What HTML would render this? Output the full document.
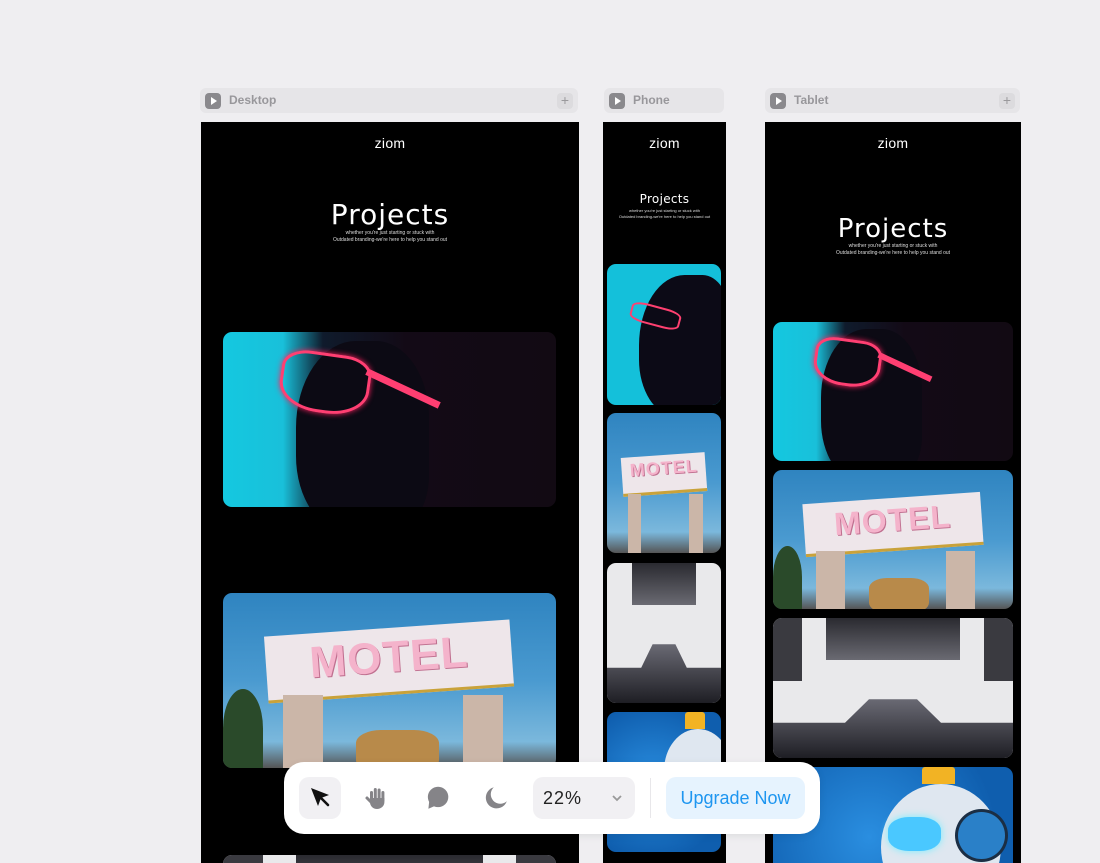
<!DOCTYPE html>
<html><head><meta charset="utf-8"><style>
*{margin:0;padding:0;box-sizing:border-box}
html,body{overflow:hidden}
body{width:1100px;height:863px;background:#efeef1;position:relative;overflow:hidden;font-family:"Liberation Sans",sans-serif}
.hdr{position:absolute;top:88px;height:25px;background:#e6e5e8;border-radius:6px}
.hdr .pl{position:absolute;left:5px;top:5px;width:16px;height:16px;background:#8a898d;border-radius:4px}
.hdr .pl:after{content:"";position:absolute;left:6px;top:4px;border-left:6px solid #fff;border-top:4px solid transparent;border-bottom:4px solid transparent}
.hdr span{position:absolute;left:29px;top:5px;font-size:12px;color:#98979b;font-weight:bold}
.hdr .plus{position:absolute;right:5px;top:5px;width:16px;height:16px;background:#dcdbde;border-radius:4px;color:#9a999c;font-size:14px;line-height:15px;text-align:center}
.fr{position:absolute;top:122px;height:741px;background:#000;overflow:hidden}
.logo{position:absolute;width:100%;text-align:center;color:#fff;font-size:14px;top:13px;letter-spacing:0.3px}
.ttl{position:absolute;width:100%;text-align:center;color:#fff;font-family:"DejaVu Sans",sans-serif;font-weight:normal;letter-spacing:1px}
.sub{position:absolute;width:100%;text-align:center;color:#ddd;font-size:5px;line-height:7px}
.im{position:absolute;border-radius:9px;overflow:hidden}
.g{background:linear-gradient(90deg,#14c8e0 0%,#19c0da 18%,#0f1b2c 30%,#130a16 55%,#120a13 100%)}
.g .hd{position:absolute;left:16%;top:5%;width:50%;height:110%;background:#0c0a14;border-radius:45% 40% 30% 40%}
.g .gl{position:absolute;left:18%;top:12%;width:40%;height:28%;border:3px solid #ff3f72;border-radius:30% 30% 45% 45%;transform:rotate(8deg);box-shadow:0 0 6px #ff2060}
.g .gl2{position:absolute;left:53%;top:22%;width:20%;height:4%;background:#ff3f72;transform:rotate(25deg)}
.g .mg{position:absolute;left:22%;top:30%;width:30%;height:40%;background:radial-gradient(#6a0a3a,transparent 70%)}
.m{background:linear-gradient(180deg,#2f84c0 0%,#4a9ad0 50%,#7bb8dc 85%,#555 100%)}
.m .sg{position:absolute;left:13%;top:20%;width:74%;height:38%;background:#eee6ea;border-bottom:3px solid #c9a23a;transform:rotate(-4deg)}
.m .sg b{position:absolute;left:0;right:0;top:8%;text-align:center;color:#f4b3cb;font-weight:bold;font-family:"Liberation Sans",sans-serif;letter-spacing:1px;text-shadow:1px 1px 0 #c07090}
.m .p1,.m .p2{position:absolute;top:58%;width:12%;height:45%;background:#cbb6a8}
.m .p1{left:18%}.m .p2{left:72%}
.m .tr{position:absolute;left:0;top:55%;width:12%;height:45%;background:#2a4a2a;border-radius:50% 50% 0 0}
.m .bk{position:absolute;left:40%;top:78%;width:25%;height:25%;background:#b88a4a;border-radius:30%}
.b{background:#e9e9eb}
.b .t{position:absolute;left:22%;right:22%;top:0;height:30%;background:linear-gradient(180deg,#2a2a30,#6a6a72)}
.b .tl{position:absolute;left:0;top:0;width:12%;height:45%;background:#3a3a40}
.b .trr{position:absolute;right:0;top:0;width:12%;height:45%;background:#3a3a40}
.b .bt{position:absolute;left:0;right:0;bottom:0;height:42%;background:linear-gradient(180deg,#6a6a74,#1e1e24);clip-path:polygon(0 40%,30% 40%,40% 0,60% 0,70% 40%,100% 40%,100% 100%,0 100%)}
.r{background:radial-gradient(circle at 40% 50%,#2a8ee0,#0f5eae 80%)}
.r .h{position:absolute;left:45%;top:12%;width:50%;height:90%;background:#dfe7f0;border-radius:50%}
.r .e{position:absolute;left:48%;top:36%;width:22%;height:24%;background:#4ac8ff;border-radius:40%;box-shadow:0 0 8px #7ef}
.r .c{position:absolute;left:76%;top:30%;width:22%;height:38%;background:#2a80c8;border:3px solid #1b2e44;border-radius:50%}
.r .y{position:absolute;left:62%;top:0;width:14%;height:12%;background:#f2b324;border-radius:3px 3px 0 0}
.tb{position:absolute;left:284px;top:762px;width:536px;height:72px;background:#fff;border-radius:20px;box-shadow:0 2px 8px rgba(0,0,0,.08)}
.btn{position:absolute;top:15px;width:42px;height:42px;border-radius:10px;display:flex;align-items:center;justify-content:center}
</style></head><body>

<div class="hdr" style="left:200px;width:378px"><div class="pl"></div><span>Desktop</span><div class="plus">+</div></div>
<div class="hdr" style="left:604px;width:120px"><div class="pl"></div><span>Phone</span></div>
<div class="hdr" style="left:765px;width:255px"><div class="pl"></div><span>Tablet</span><div class="plus">+</div></div>

<!-- Desktop -->
<div class="fr" style="left:201px;width:378px">
 <div class="logo">ziom</div>
 <div class="ttl" style="top:76px;font-size:28px">Projects</div>
 <div class="sub" style="top:108px">whether you're just starting or stuck with<br>Outdated branding-we're here to help you stand out</div>
 <div class="im g" style="left:22px;top:210px;width:333px;height:175px"><div class="mg"></div><div class="hd" style="left:22%;width:40%"></div><div class="gl" style="left:17%;width:27%;height:34%"></div><div class="gl2" style="left:42%;top:30%;width:24%"></div></div>
 <div class="im m" style="left:22px;top:471px;width:333px;height:175px"><div class="tr"></div><div class="sg"><b style="font-size:44px">MOTEL</b></div><div class="p1"></div><div class="p2"></div><div class="bk"></div></div>
 <div class="im b" style="left:22px;top:733px;width:333px;height:175px"><div class="tl"></div><div class="trr"></div><div class="t"></div></div>
</div>

<!-- Phone -->
<div class="fr" style="left:603px;width:123px">
 <div class="logo">ziom</div>
 <div class="ttl" style="top:70px;font-size:12px;letter-spacing:0.3px">Projects</div>
 <div class="sub" style="top:86px;font-size:4px;line-height:6px">whether you're just starting or stuck with<br>Outdated branding-we're here to help you stand out</div>
 <div class="im" style="left:4px;top:142px;width:114px;height:141px;background:#14c0da"><div style="position:absolute;left:28%;top:8%;width:80%;height:100%;background:#0c0a16;border-radius:50% 30% 0 40%"></div><div style="position:absolute;left:20%;top:30%;width:45%;height:14%;border:2px solid #ff4070;border-radius:30%;transform:rotate(15deg)"></div></div>
 <div class="im m" style="left:4px;top:291px;width:114px;height:140px"><div class="sg" style="top:30%;height:28%"><b style="font-size:18px">MOTEL</b></div><div class="p1"></div><div class="p2"></div></div>
 <div class="im b" style="left:4px;top:441px;width:114px;height:140px"><div class="t"></div><div class="bt"></div></div>
 <div class="im r" style="left:4px;top:590px;width:114px;height:140px"><div class="h" style="left:50%;width:60%;height:60%"></div><div class="y" style="left:68%;width:18%"></div></div>
</div>

<!-- Tablet -->
<div class="fr" style="left:765px;width:256px">
 <div class="logo">ziom</div>
 <div class="ttl" style="top:92px;font-size:26px">Projects</div>
 <div class="sub" style="top:121px">whether you're just starting or stuck with<br>Outdated branding-we're here to help you stand out</div>
 <div class="im g" style="left:8px;top:200px;width:240px;height:139px"><div class="mg"></div><div class="hd" style="left:20%;width:42%"></div><div class="gl" style="left:17%;width:28%;height:34%"></div><div class="gl2" style="left:43%;top:30%;width:24%"></div></div>
 <div class="im m" style="left:8px;top:348px;width:240px;height:139px"><div class="tr"></div><div class="sg"><b style="font-size:32px">MOTEL</b></div><div class="p1"></div><div class="p2"></div><div class="bk"></div></div>
 <div class="im b" style="left:8px;top:496px;width:240px;height:140px"><div class="tl"></div><div class="trr"></div><div class="t"></div><div class="bt"></div></div>
 <div class="im r" style="left:8px;top:645px;width:240px;height:140px"><div class="y"></div><div class="h"></div><div class="e"></div><div class="c"></div></div>
</div>

<!-- Toolbar -->
<div class="tb">
 <div class="btn" style="left:15px;background:#f1f0f3"><svg width="26" height="26" viewBox="0 0 26 26"><path d="M4 3 L22 10 L14 13 L11 21 Z" fill="#111"/><path d="M14 13 L21 20" stroke="#111" stroke-width="2.6" stroke-linecap="round"/></svg></div>
 <div class="btn" style="left:72px"><svg width="26" height="26" viewBox="0 0 26 26" fill="#858488"><rect x="6" y="6" width="3" height="10" rx="1.5"/><rect x="9.8" y="3" width="3" height="12" rx="1.5"/><rect x="13.6" y="3.5" width="3" height="12" rx="1.5"/><rect x="17.4" y="6" width="3" height="11" rx="1.5"/><path d="M6 13 H20.4 V17 C20.4 21 17 24 13 24 C9 24 6 21 6 17 Z"/><path d="M3 13 L7 17" stroke="#858488" stroke-width="3" stroke-linecap="round"/></svg></div>
 <div class="btn" style="left:132px"><svg width="28" height="28" viewBox="0 0 26 26"><circle cx="14" cy="12" r="9.5" fill="#858488"/><path d="M6 14 L5 23 L12 20 Z" fill="#858488"/></svg></div>
 <div class="btn" style="left:191px"><svg width="28" height="28" viewBox="0 0 26 26"><path d="M11 3 A10 10 0 1 0 23 16 A8 8 0 0 1 11 3 Z" fill="#858488"/></svg></div>
 <div style="position:absolute;left:249px;top:15px;width:102px;height:42px;background:#f1f0f3;border-radius:10px">
  <span style="position:absolute;left:10px;top:11px;font-size:18px;color:#222;letter-spacing:1px">22%</span>
  <svg style="position:absolute;left:78px;top:16px" width="12" height="10" viewBox="0 0 12 10"><path d="M2 3 L6 7 L10 3" stroke="#999" stroke-width="1.8" fill="none"/></svg>
 </div>
 <div style="position:absolute;left:366px;top:16px;width:1px;height:40px;background:#e8e7ea"></div>
 <div style="position:absolute;left:382px;top:15px;width:139px;height:42px;background:#e6f3fe;border-radius:10px;color:#1e96f0;font-size:18px;line-height:42px;text-align:center">Upgrade Now</div>
</div>
</body></html>
